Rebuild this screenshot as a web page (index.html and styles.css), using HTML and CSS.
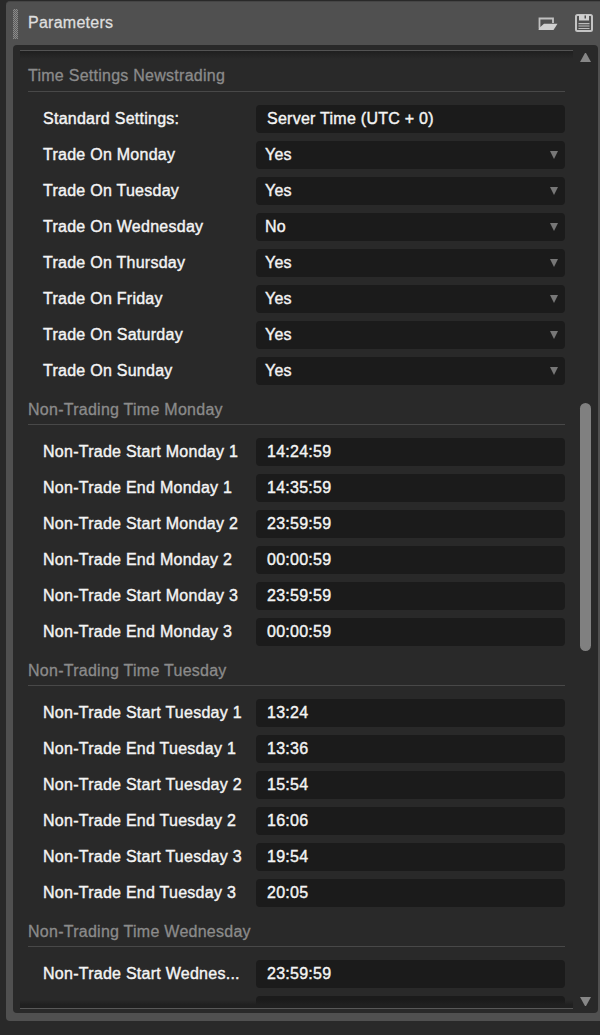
FILE: index.html
```html
<!DOCTYPE html>
<html>
  <head>
    <meta charset="UTF-8">
    <title>Parameters</title>
    <link rel="stylesheet" href="styles.css">
  </head>
  <body>

    <div class="panel">
      <div class="header">
        <div class="grip"></div>
        <h1>Parameters</h1>
        <svg class="open" width="20" height="14" viewBox="0 0 20 14">
          <path d="M1.500 11V1.500H15V6" fill="none" stroke="#c0c0c0" stroke-width="1.8"/>
          <path d="M6 6.800H19.500L15.500 13H.6V11.500Z" fill="#d0d0d0"/>
        </svg>
        <svg class="save" width="18" height="18" viewBox="0 0 18 18">
          <rect x="1" y="1" width="16" height="16" rx="1.500" fill="none" stroke="#c4c4c4" stroke-width="2"/>
          <path d="M4 1H14V6.500H4Z" fill="#d0d0d0"/>
          <path d="M9.500 1.500H11V4.500H9.500Z" fill="#505050"/>
          <path d="M3.500 9.700H14.500M3.500 12H14.500M3.500 14.500H14.500" stroke="#bdbdbd" stroke-width="1.200"/>
        </svg>
      </div>

      <div class="body">
        <div class="view">
          <h2>Time Settings Newstrading</h2>
          <div class="row"><label>Standard Settings:</label><div class="field">Server Time (UTC + 0)</div></div>
          <div class="row"><label>Trade On Monday</label><div class="field select">Yes</div></div>
          <div class="row"><label>Trade On Tuesday</label><div class="field select">Yes</div></div>
          <div class="row"><label>Trade On Wednesday</label><div class="field select">No</div></div>
          <div class="row"><label>Trade On Thursday</label><div class="field select">Yes</div></div>
          <div class="row"><label>Trade On Friday</label><div class="field select">Yes</div></div>
          <div class="row"><label>Trade On Saturday</label><div class="field select">Yes</div></div>
          <div class="row"><label>Trade On Sunday</label><div class="field select">Yes</div></div>

          <h2>Non-Trading Time Monday</h2>
          <div class="row"><label>Non-Trade Start Monday 1</label><div class="field">14:24:59</div></div>
          <div class="row"><label>Non-Trade End Monday 1</label><div class="field">14:35:59</div></div>
          <div class="row"><label>Non-Trade Start Monday 2</label><div class="field">23:59:59</div></div>
          <div class="row"><label>Non-Trade End Monday 2</label><div class="field">00:00:59</div></div>
          <div class="row"><label>Non-Trade Start Monday 3</label><div class="field">23:59:59</div></div>
          <div class="row"><label>Non-Trade End Monday 3</label><div class="field">00:00:59</div></div>

          <h2>Non-Trading Time Tuesday</h2>
          <div class="row"><label>Non-Trade Start Tuesday 1</label><div class="field">13:24</div></div>
          <div class="row"><label>Non-Trade End Tuesday 1</label><div class="field">13:36</div></div>
          <div class="row"><label>Non-Trade Start Tuesday 2</label><div class="field">15:54</div></div>
          <div class="row"><label>Non-Trade End Tuesday 2</label><div class="field">16:06</div></div>
          <div class="row"><label>Non-Trade Start Tuesday 3</label><div class="field">19:54</div></div>
          <div class="row"><label>Non-Trade End Tuesday 3</label><div class="field">20:05</div></div>

          <h2>Non-Trading Time Wednesday</h2>
          <div class="row"><label>Non-Trade Start Wednes...</label><div class="field">23:59:59</div></div>
          <div class="row"><label></label><div class="field"></div></div>
        </div>

        <div class="scrollbar">
          <div class="up"></div>
          <div class="track"><div class="thumb"></div></div>
          <div class="down"></div>
        </div>
      </div>
    </div>

  </body>
</html>
```
FILE: styles.css
```css
*
{
  box-sizing:border-box
}
body
{
  margin:0;
  height:1035px;
  padding:1px 0 0 6px;
  overflow:hidden;
  background-color:#292929;
  font-family:"Liberation Sans",Arial,sans-serif;
  font-size:16px;
  letter-spacing:.26px;
  color:#f4f4f4
}
.panel
{
  width:594px;
  height:1020px;
  padding:0 2px 0 7px;
  background-color:#505050;
  border-radius:4px 0 0 4px;
  border-top:1px solid #454545
}
.header
{
  display:flex;
  align-items:center;
  height:43px;
  padding-right:5px
}
.grip
{
  width:5px;
  height:30px;
  background:repeating-conic-gradient(#8a8a8a 0 25%,#5c5c5c 0 50%) 0 0/2px 2px
}
h1
{
  flex:1;
  margin:0 0 1px 10px;
  font-size:16px;
  font-weight:normal;
  color:#dedede;
  -webkit-text-stroke:.3px
}
.open
{
  margin:0 17px 0 0
}
.save
{
  margin-bottom:2px
}
.body
{
  display:flex;
  height:968px;
  padding:5px 7px 4px 7px;
  background-color:#292929;
  border-radius:4px
}
.view
{
  position:relative;
  width:553px;
  height:959px;
  padding:15px 8px 0 8px;
  overflow:hidden;
  border-top:1px solid #535353;
  border-bottom:1px solid #585858
}
/* fades where the list scrolls under the edges */
.view:before, .view:after
{
  content:"";
  position:absolute;
  left:0;
  right:0;
  top:0;
  height:8px;
  background:linear-gradient(#1f1f1f,#292929)
}
.view:after
{
  top:auto;
  bottom:0;
  background:linear-gradient(rgba(32,32,32,0),#202020 60%)
}
h2
{
  height:26px;
  margin:14px 0 13px 0;
  border-bottom:1px solid #484848;
  font-size:16px;
  font-weight:normal;
  line-height:22px;
  color:#8b8b8b;
  -webkit-text-stroke:.3px
}
h2:first-child
{
  margin-top:0;
  line-height:20px
}
.row
{
  display:flex;
  height:28px;
  margin-bottom:8px;
  padding-left:15px;
  line-height:27px;
  -webkit-text-stroke:.4px
}
label
{
  width:213px;
  white-space:nowrap
}
.field
{
  flex:1;
  padding-left:11px;
  line-height:28px;
  background-color:#1b1b1b;
  border-radius:4px
}
.select
{
  display:flex;
  align-items:center;
  justify-content:space-between;
  padding:0 7px 0 9px
}
.select:after
{
  content:"";
  border:4px solid transparent;
  border-top:8px solid #777;
  border-bottom:0
}
.scrollbar
{
  display:flex;
  flex-direction:column;
  width:11px;
  margin-left:7px
}
.up, .down
{
  height:9px;
  border:5px solid transparent;
  border-top:0;
  border-bottom:9px solid #878787
}
.up
{
  margin-top:3px
}
.down
{
  margin-bottom:3px;
  border-top:9px solid #878787;
  border-bottom:0
}
.track
{
  flex:1;
  padding-top:341px
}
.thumb
{
  height:248px;
  border-radius:6px;
  background-color:#808080
}
```
